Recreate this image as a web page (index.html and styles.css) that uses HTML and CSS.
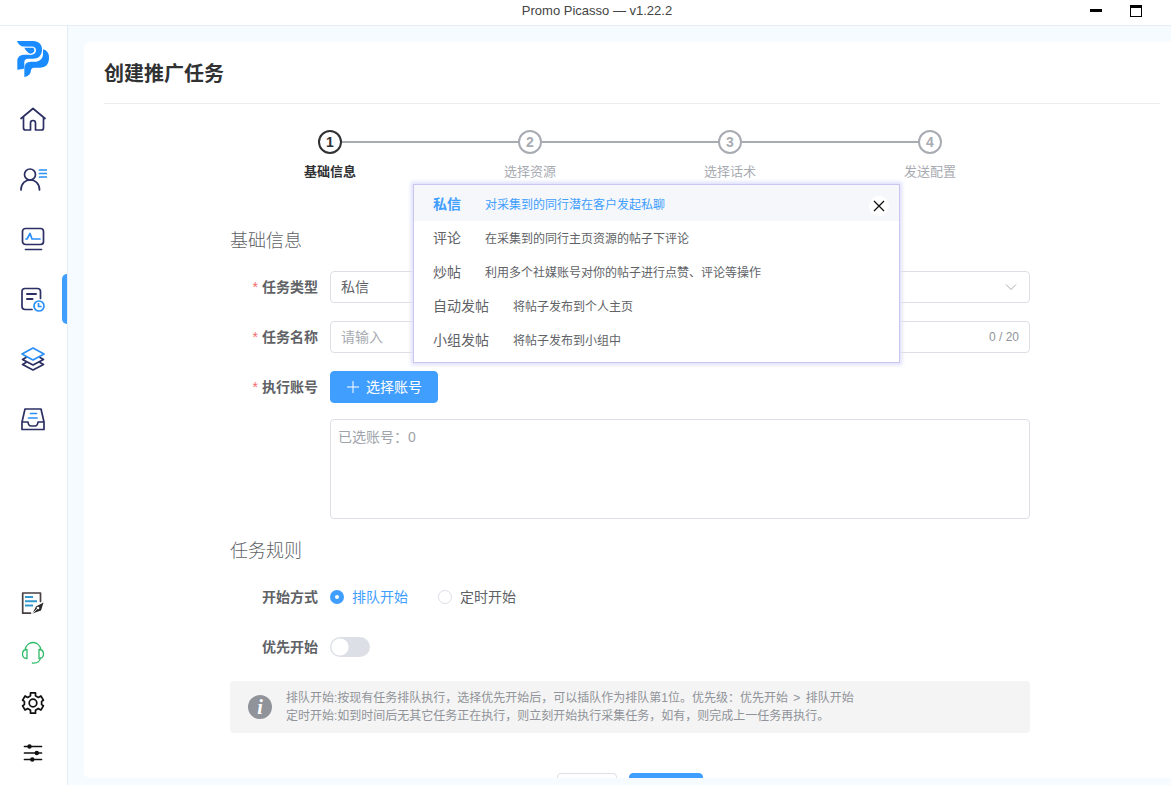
FILE: index.html
```html
<!DOCTYPE html>
<html lang="zh-CN">
<head>
<meta charset="utf-8">
<title>Promo Picasso — v1.22.2</title>
<link rel="stylesheet" href="styles.css">
</head>
<body>
<div class="window">
  <header class="titlebar">
    <span class="titlebar-text">Promo Picasso — v1.22.2</span>
    <button class="window-btn" type="button" aria-label="最小化"><svg width="12" height="12" viewBox="0 0 12 12"><path d="M0 4h12v3H0z"/></svg></button>
    <button class="window-btn" type="button" aria-label="最大化"><svg width="12" height="12" viewBox="0 0 12 12"><path fill-rule="evenodd" d="M0 0h12v12H0zM1 3v8h10V3z"/></svg></button>
  </header>
  <div class="body">
    <nav class="sidebar" aria-label="主导航">
      <a class="nav-item" href="#" aria-label="Promo Picasso">
        <svg width="32" height="36" viewBox="51 66 96 108" fill="#1a8cff">
          <path d="M51 66H99C117 66 126 77 126 92C126 109 115 119 99 119H84Q73 119 73 130V145Q73 150 68 150L52 152V127Q52 107 72 107H94Q107 107 108 94Q108 83 96 83H73Q56 82 51 66Z"/>
          <path d="M70 83H101Q107 89 105 99Q101 107 90 107Q78 102 73 90Z" fill="#fff"/>
          <path d="M73 86H100Q104 90 103 97Q99 104 91 104Q80 100 73 86Z"/>
          <path d="M129 91C141 94 147 103 147 116C147 135 137 146 119 146H102Q94 146 93 154Q92 171 73 174V147Q74 128 92 128H109Q128 124 129 107Z"/>
        </svg>
      </a>
      <a class="nav-item" href="#" aria-label="首页">
        <svg class="icon" viewBox="0 0 28 28" stroke="#2b2f63"><path d="M2 13.500 14 3.500 26 13.500M4.500 12V23Q4.500 25 6.500 25H11.500V18Q11.500 15.500 14 15.500T16.500 18V25H22.500Q24.500 25 24.500 23V12"/></svg>
      </a>
      <a class="nav-item" href="#" aria-label="账号">
        <svg class="icon" viewBox="0 0 28 28" stroke="#2b2f63"><circle cx="11" cy="9.500" r="5.500"/><path d="M2 25C2 11.500 20.500 11.500 20.500 25"/><path stroke="#2a8ff7" d="M20.500 5H27.500M20.500 8.500H27.500M20.500 12H27.500"/></svg>
      </a>
      <a class="nav-item" href="#" aria-label="监控">
        <svg class="icon" viewBox="0 0 28 28" stroke="#2b2f63"><rect x="3.500" y="3.500" width="21" height="16" rx="3"/><path d="M6.500 24.500H22.500"/><path stroke="#2a8ff7" d="M7 14H8L11 8.500 13 14H21"/></svg>
      </a>
      <a class="nav-item nav-item-active" href="#" aria-label="任务" aria-current="page">
        <svg class="icon" viewBox="0 0 28 28" stroke="#2b2f63"><path d="M13 24.500H6Q3 24.500 3 21.500V6.500Q3 3.500 6 3.500H18.500Q21.500 3.500 21.500 6.500V13.500"/><path d="M8 9H17M8 14H13.500" stroke-width="2"/><g stroke="#2a8ff7"><circle cx="20" cy="21" r="5"/><path d="M19.500 18.500V21.500H22"/></g></svg>
      </a>
      <a class="nav-item" href="#" aria-label="资源">
        <svg class="icon" viewBox="0 0 28 28" stroke="#2b2f63"><path d="M7 12.500 3.500 14.500 14 20 24.500 14.500 21 12.500M7 17.500 3.500 19.500 14 25 24.500 19.500 21 17.500"/><path stroke="#2a8ff7" fill="#fff" d="M14 3 25 9 14 15 3 9Z"/></svg>
      </a>
      <a class="nav-item" href="#" aria-label="收件箱">
        <svg class="icon" viewBox="0 0 28 28" stroke="#2b2f63"><path d="M6 4H22L25 17V24.500H3V17ZM3 17H9Q9.500 21 12 21H16Q18.500 21 19 17H25"/><path stroke="#2a8ff7" d="M11.500 8.500H17.500M9.500 13H18"/></svg>
      </a>
      <div class="nav-bottom">
        <a class="nav-item nav-item-small" href="#" aria-label="日志">
          <svg class="icon" viewBox="0 0 28 28" stroke="#4a4044"><path d="M11.500 24.200H3.700V4H21.500V12.500"/><path stroke="#3299cc" stroke-width="2" stroke-linecap="butt" d="M6 8H14M6 12.200H18M6 16.400H14"/><path d="M24.500 13.500 22 21.500 13.500 24.500 17 17.500Z" fill="#2b2b2b" stroke="none"/><path d="M14 24 18.500 19.500" stroke="#fff" stroke-width=".8"/><circle cx="19" cy="19" r="1.300" fill="#fff" stroke="none"/></svg>
        </a>
        <a class="nav-item nav-item-small" href="#" aria-label="客服">
          <svg class="icon icon-thin" viewBox="0 0 28 28" stroke="#2fba68"><path d="M6 11C7.500 1 20.500 1 22 11M8 10.500V19.500Q3.500 19.500 3.500 15T8 10.500ZM20 10.500V19.500Q24.500 19.500 24.500 15T20 10.500ZM21.500 19Q20.500 24.500 13.500 24"/></svg>
        </a>
        <a class="nav-item nav-item-small" href="#" aria-label="设置">
          <svg class="icon" viewBox="0 0 28 28" stroke="#111"><path d="M11.500 3.800H16.500V6.800L19.300 8.400 21.900 6.900 24.400 11.200 22.600 12.400V15.600L24.400 16.800 21.900 21.100 19.300 19.600 16.500 21.200V24.200H11.500V21.200L8.700 19.600 6.100 21.100 3.600 16.800 5.400 15.600V12.400L3.600 11.200 6.100 6.900 8.700 8.400 11.500 6.800Z"/><circle cx="14" cy="14" r="3.800"/></svg>
        </a>
        <a class="nav-item nav-item-small" href="#" aria-label="偏好">
          <svg class="icon" viewBox="0 0 28 28" stroke="#111"><path d="M5.500 7.500H22.500M5.500 14H22.500M5.500 20.500H22.500"/><g fill="#111" stroke="none"><circle cx="10.500" cy="7.500" r="2.200"/><circle cx="17.800" cy="14" r="2.200"/><circle cx="13.300" cy="20.500" r="2.200"/></g></svg>
        </a>
      </div>
    </nav>

    <main class="main">
      <div class="card">
        <h1 class="page-title">创建推广任务</h1>
        <div class="content">
          <ol class="steps">
            <li class="step step-current"><span class="step-num">1</span><span>基础信息</span></li>
            <li class="step"><span class="step-num">2</span><span>选择资源</span></li>
            <li class="step"><span class="step-num">3</span><span>选择话术</span></li>
            <li class="step"><span class="step-num">4</span><span>发送配置</span></li>
          </ol>

          <form class="form">
            <h2 class="section-title">基础信息</h2>
            <div class="field">
              <label class="label required" for="type">任务类型</label>
              <div class="control">
                <select class="input" id="type"><option>私信</option><option>评论</option><option>炒帖</option><option>自动发帖</option><option>小组发帖</option></select>
                <svg class="arrow" width="12" height="12" viewBox="0 0 12 12"><path d="M1 3.500 6 8.500 11 3.500"/></svg>
                <div class="popup">
                  <button class="popup-close" type="button" aria-label="关闭"><svg width="12" height="12" viewBox="0 0 12 12"><path d="M1 1 11 11M11 1 1 11"/></svg></button>
                  <ul class="popup-list">
                    <li class="option option-active"><span class="option-name">私信</span><span>对采集到的同行潜在客户发起私聊</span></li>
                    <li class="option"><span class="option-name">评论</span><span>在采集到的同行主页资源的帖子下评论</span></li>
                    <li class="option"><span class="option-name">炒帖</span><span>利用多个社媒账号对你的帖子进行点赞、评论等操作</span></li>
                    <li class="option"><span class="option-name">自动发帖</span><span>将帖子发布到个人主页</span></li>
                    <li class="option"><span class="option-name">小组发帖</span><span>将帖子发布到小组中</span></li>
                  </ul>
                </div>
              </div>
            </div>
            <div class="field">
              <label class="label required" for="name">任务名称</label>
              <div class="control">
                <input class="input" id="name" type="text" maxlength="20" placeholder="请输入">
                <span class="count">0 / 20</span>
              </div>
            </div>
            <div class="field">
              <label class="label required" for="accounts">执行账号</label>
              <div class="control control-stack">
                <button class="btn btn-primary btn-add" type="button"><svg width="14" height="14" viewBox="0 0 14 14"><path d="M7 1V13M1 7H13"/></svg>选择账号</button>
                <textarea class="accounts" id="accounts" readonly>已选账号：0</textarea>
              </div>
            </div>

            <h2 class="section-title">任务规则</h2>
            <div class="field">
              <span class="label" id="start-label">开始方式</span>
              <div class="control radios" role="radiogroup" aria-labelledby="start-label">
                <label class="radio"><input type="radio" name="start" checked><span>排队开始</span></label>
                <label class="radio"><input type="radio" name="start"><span>定时开始</span></label>
              </div>
            </div>
            <div class="field">
              <label class="label" for="priority">优先开始</label>
              <div class="control"><input class="switch" id="priority" type="checkbox" role="switch"></div>
            </div>
            <div class="hint">
              <span class="hint-icon">i</span>
              <p>排队开始:按现有任务排队执行，选择优先开始后，可以插队作为排队第1位。优先级：优先开始 <span class="hint-sign">&gt;</span> 排队开始<br>定时开始:如到时间后无其它任务正在执行，则立刻开始执行采集任务，如有，则完成上一任务再执行。</p>
            </div>
            <div class="actions">
              <button class="btn btn-cancel" type="button" aria-label="取消"></button>
              <button class="btn btn-primary btn-next" type="submit" aria-label="下一步"></button>
            </div>
          </form>
        </div>
      </div>
    </main>
  </div>
</div>
</body>
</html>
```

FILE: styles.css
```css
* { box-sizing: border-box; }

body {
  margin: 0;
  font: 14px/20px "Liberation Sans", "Noto Sans CJK SC", sans-serif;
  color: #606266;
  background: #fff;
}

button, input, select, textarea { font: inherit; color: inherit; }
button { cursor: pointer; }
h1, h2, p, ol, ul { margin: 0; padding: 0; }
ol, ul { list-style: none; }
svg { display: block; }

.window { display: flex; flex-direction: column; height: 100vh; overflow: hidden; }

.titlebar {
  display: flex;
  flex: none;
  height: 26px;
  padding: 0 15px 0 118px;
  border-bottom: 1px solid #e6edf4;
}
.titlebar-text { flex: 1; text-align: center; font-size: 13px; line-height: 22px; color: #444; }
.window-btn {
  display: flex;
  align-items: center;
  justify-content: center;
  width: 40px;
  height: 22px;
  padding: 0;
  border: 0;
  background: none;
}

.body { display: flex; flex: 1; min-height: 0; }

.sidebar {
  display: flex;
  flex: none;
  flex-direction: column;
  width: 68px;
  padding: 3px 0 7px;
  border-right: 1px solid #e4edf5;
}
.nav-item {
  position: relative;
  display: flex;
  align-items: center;
  justify-content: center;
  height: 60px;
  padding-right: 2px;
}
.nav-item-small { height: 50px; }
.nav-item-active::after {
  content: "";
  position: absolute;
  right: 0;
  top: 5px;
  width: 5px;
  height: 50px;
  border-radius: 5px 0 0 5px;
  background: #409eff;
}
.nav-bottom { margin-top: auto; }
.icon {
  width: 28px;
  height: 28px;
  fill: none;
  stroke-width: 1.700;
  stroke-linecap: round;
  stroke-linejoin: round;
}
.icon-thin { stroke-width: 1.300; }

.main { display: flex; flex: 1; min-width: 0; padding: 16px 0 7px 16px; background: #f6fbff; }
.card { flex: 1; min-width: 0; overflow: hidden; padding: 0 11px 0 20px; border-radius: 6px 0 0 6px; background: #fff; }
.page-title {
  padding: 17px 0 14px;
  border-bottom: 1px solid #ebeef0;
  font-size: 20px;
  line-height: 30px;
  color: #303133;
}
.content { padding: 26px 4px 0 0; }

.steps { display: flex; max-width: 800px; margin: 0 auto; }
.step {
  position: relative;
  display: flex;
  flex: 1;
  flex-direction: column;
  align-items: center;
  gap: 8px;
  font-size: 13px;
  color: #a8abb2;
}
.step + .step::before {
  content: "";
  position: absolute;
  top: 11px;
  left: calc(-50% + 12px);
  width: calc(100% - 24px);
  height: 2px;
  background: #a8abb2;
}
.step-num {
  width: 24px;
  height: 24px;
  border: 2px solid;
  border-radius: 50%;
  text-align: center;
  font-size: 14px;
  font-weight: bold;
}
.step-current { font-weight: bold; color: #303133; }

.form { max-width: 800px; margin: 0 auto; padding-top: 45px; }
.section-title { padding: 1px 0 17px; font-size: 18px; font-weight: 300; line-height: 26px; }
.field { display: flex; margin-bottom: 18px; }
.label {
  flex: none;
  width: 100px;
  padding-right: 12px;
  text-align: right;
  font-weight: bold;
  line-height: 32px;
}
.required::before { content: "*"; margin-right: 4px; font-weight: normal; color: #f56c6c; }
.control { position: relative; display: flex; flex: 1; align-items: center; min-width: 0; min-height: 32px; }
.control-stack { flex-direction: column; align-items: flex-start; gap: 16px; }
.input {
  width: 100%;
  height: 32px;
  padding: 0 10px;
  border: 1px solid #dcdfe6;
  border-radius: 4px;
  background: #fff;
  appearance: none;
}
.input::placeholder { color: #a8abb2; }
.arrow { position: absolute; right: 13px; fill: none; stroke: #a8abb2; }
.count { position: absolute; right: 11px; font-size: 12px; color: #909399; }

.accounts {
  display: block;
  width: 100%;
  height: 100px;
  padding: 7px;
  border: 1px solid #dcdfe6;
  border-radius: 4px;
  color: #a0a3aa;
  resize: none;
}

.btn {
  display: flex;
  align-items: center;
  height: 32px;
  padding: 0 15px;
  border: 1px solid #dcdfe6;
  border-radius: 4px;
  background: #fff;
}
.btn-primary { border-color: #409eff; background: #409eff; color: #fff; }
.btn-add { gap: 6px; }
.btn-add svg { fill: none; stroke: #fff; }
.btn-cancel { width: 60px; }
.btn-next { width: 74px; }

.popup {
  position: absolute;
  z-index: 2;
  left: 83px;
  top: -87px;
  width: 487px;
  padding-bottom: 5px;
  border: 1px solid #c9c6f0;
  background: #fff;
  box-shadow: 0 0 4px 2px #dedffb;
}
.option { display: flex; align-items: baseline; gap: 24px; height: 34px; padding: 0 19px; font-size: 12px; line-height: 34px; }
.option-name { font-size: 14px; }
.option-active { height: 36px; background: #f5f7fa; line-height: 38px; color: #409eff; }
.option-active .option-name { font-weight: bold; }
.popup-close {
  position: absolute;
  right: 10px;
  top: 11px;
  padding: 4px;
  border: 0;
  border-radius: 50%;
  background: #fff;
}
.popup-close svg { fill: none; stroke: #111; stroke-width: 1.300; }

.radios { gap: 30px; }
.radio { display: flex; align-items: center; gap: 8px; }
.radio input {
  width: 14px;
  height: 14px;
  margin: 0;
  border: 1px solid #dcdfe6;
  border-radius: 50%;
  background: #fff;
  appearance: none;
}
.radio input:checked { border: 5px solid #409eff; }
.radio input:checked + span { color: #409eff; }

.switch {
  width: 40px;
  height: 20px;
  margin: 0;
  border-radius: 10px;
  background: radial-gradient(circle at 10px 10px, #fff 8px, #dcdfe6 9px);
  appearance: none;
}

.hint {
  display: flex;
  align-items: center;
  gap: 14px;
  padding: 8px 18px;
  border-radius: 4px;
  background: #f4f4f4;
  font-size: 12px;
  line-height: 18px;
  color: #909399;
}
.hint-sign { margin: 0 2px; }
.hint-icon {
  flex: none;
  width: 24px;
  height: 24px;
  border-radius: 50%;
  background: #909399;
  color: #fff;
  text-align: center;
  font: italic bold 20px/24px "Liberation Serif", serif;
}

.actions { display: flex; justify-content: center; gap: 12px; padding-top: 40px; }
```
